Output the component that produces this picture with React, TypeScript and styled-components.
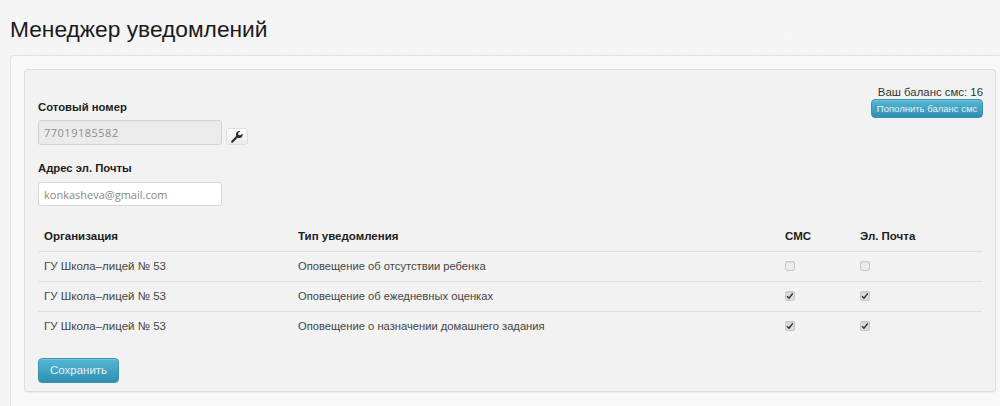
import React from "react";
import styled, { createGlobalStyle } from "styled-components";

const Global = createGlobalStyle`
  html, body { margin: 0; padding: 0; }
  body {
    width: 1000px; height: 406px; overflow: hidden;
    font-family: "Liberation Sans", Arial, sans-serif;
    background-color: #f6f6f6;
    background-image: repeating-linear-gradient(45deg, #f3f3f3 0 1px, transparent 1px 3px), repeating-linear-gradient(-45deg, #f3f3f3 0 1px, transparent 1px 3px);
  }
`;
const Page = styled.div`padding: 15px 0 0 10px;`;
const Title = styled.h1`
  margin: 0 0 12px; font-size: 22.75px; line-height: 28px; font-weight: 400; color: #1a1a1a;
`;
const Outer = styled.div`
  background: #f8f8f8; border: 1px solid #e2e2e2; border-right: 0; border-bottom: 0; border-radius: 4px 0 0 0;
  padding: 13px 4px 14px 13px; box-sizing: border-box; height: 351px;
`;
const Inner = styled.div`
  position: relative; background: #f2f2f2; border: 1px solid #dcdcdc; border-radius: 4px;
  box-shadow: 0 1px 1px rgba(0,0,0,.05);
  width: 972px; height: 323px; box-sizing: border-box; padding: 30px 12px 0 13px;
`;
const Balance = styled.div`
  position: absolute; top: 15px; right: 12px; display: flex; flex-direction: column; align-items: flex-end;
  font-size: 11.4px; line-height: 14px; color: #333;
`;
const BlueButton = styled.button<{ $small?: boolean }>`
  display: block; box-sizing: border-box; border: 1px solid #3a94b0; border-radius: 4px; color: #e4f2f7;
  font-family: inherit; padding: 0;
  background: linear-gradient(#55b7d6, #2f8fb0);
  box-shadow: inset 0 1px 0 rgba(255,255,255,.2);
  width: ${p => (p.$small ? "112px" : "81px")};
  height: ${p => (p.$small ? "19px" : "25px")};
  font-size: ${p => (p.$small ? "9.5px" : "11.5px")};
`;
const Label = styled.label<{ $gap: number }>`
  display: block; font-size: 11.3px; line-height: 14px; font-weight: 700; color: #1d1d1d; margin-bottom: ${p => p.$gap}px;
`;
const FieldRow = styled.div`display: flex; align-items: flex-end; gap: 4px; margin-bottom: 16px;`;
const Input = styled.input`
  box-sizing: border-box; width: 184px; height: 24px;
  padding: 0 5px; border: 1px solid #d8d8d8; border-radius: 3px;
  font-family: "Open Sans", sans-serif; font-size: 11px;
  color: #888; background: #fff;
  &:disabled { height: 25px; background: #ebebeb; border-color: #d2d2d2; color: #8c8c8c; letter-spacing: .5px; opacity: 1; }
`;
const IconButton = styled.button`
  box-sizing: border-box; width: 22px; height: 17px; padding: 0; display: flex; align-items: center; justify-content: center;
  border: 1px solid #dedede; border-radius: 3px; background: linear-gradient(#fdfdfd, #ececec);
`;
const Table = styled.table`
  margin-top: 15px; width: 944px; border-collapse: collapse; table-layout: fixed;
  font-size: 11.5px; color: #444;
`;
const Th = styled.th<{ $w: number }>`
  box-sizing: border-box; width: ${p => p.$w}px; height: 30px; padding: 0 6px; text-align: left; font-size: 11.5px; font-weight: 700; color: #1d1d1d;
`;
const Td = styled.td`
  height: 29px; padding: 0 6px; border-top: 1px solid #e0e0e0;
`;
const TypeText = styled.span`font-size: 11.2px;`;
const Box = styled.span<{ $checked?: boolean }>`
  display: flex; align-items: center; justify-content: center; box-sizing: border-box; width: 10px; height: 10px;
  border: 1px solid #c8c8c8; border-radius: 2px; background: ${p => (p.$checked ? "#dcdcdc" : "#ebebeb")};
  box-shadow: inset 0 1px 1px rgba(0,0,0,.06);
`;
const SaveRow = styled.div`margin-top: 17px;`;

const rows = [
  ["Оповещение об отсутствии ребенка", false],
  ["Оповещение об ежедневных оценках", true],
  ["Оповещение о назначении домашнего задания", true],
] as const;

const Check = ({ on }: { on: boolean }) => (
  <Box $checked={on}>
    {on && (
      <svg width="8" height="8" viewBox="0 0 8 8">
        <path d="M1 4.2 3 6.2 6.8 1.4" fill="none" stroke="#333" strokeWidth="1.5" />
      </svg>
    )}
  </Box>
);

export default function App() {
  return (
    <>
      <Global />
      <Page>
        <Title>Менеджер уведомлений</Title>
        <Outer>
          <Inner>
            <Balance>
              <span>Ваш баланс смс: 16</span>
              <BlueButton $small>Пополнить баланс смс</BlueButton>
            </Balance>
            <Label $gap={6}>Сотовый номер</Label>
            <FieldRow>
              <Input disabled value="77019185582" readOnly />
              <IconButton aria-label="Настройки">
                <svg width="14" height="14" viewBox="0 0 12 12">
                  <path d="M1.2 10.8a1 1 0 0 0 1.3 0l4-4.2c1.5.5 3 .1 3.8-.9.6-.8.7-1.7.5-2.5L8.9 4.6 7.3 4.2 6.9 2.7 8.8 1C7.8.7 6.7 1 6 1.7c-.9.9-1.1 2.2-.7 3.4l-4.1 4.3a1 1 0 0 0 0 1.4z" fill="#2e2e2e" />
                </svg>
              </IconButton>
            </FieldRow>
            <Label $gap={7}>Адрес эл. Почты</Label>
            <Input value="konkasheva@gmail.com" readOnly />
            <Table>
              <thead>
                <tr>
                  <Th $w={254}>Организация</Th>
                  <Th $w={487}>Тип уведомления</Th>
                  <Th $w={75}>СМС</Th>
                  <Th $w={128}>Эл. Почта</Th>
                </tr>
              </thead>
              <tbody>
                {rows.map(([name, on]) => (
                  <tr key={name}>
                    <Td>ГУ Школа–лицей № 53</Td>
                    <Td><TypeText>{name}</TypeText></Td>
                    <Td><Check on={on} /></Td>
                    <Td><Check on={on} /></Td>
                  </tr>
                ))}
              </tbody>
            </Table>
            <SaveRow>
              <BlueButton>Сохранить</BlueButton>
            </SaveRow>
          </Inner>
        </Outer>
      </Page>
    </>
  );
}
